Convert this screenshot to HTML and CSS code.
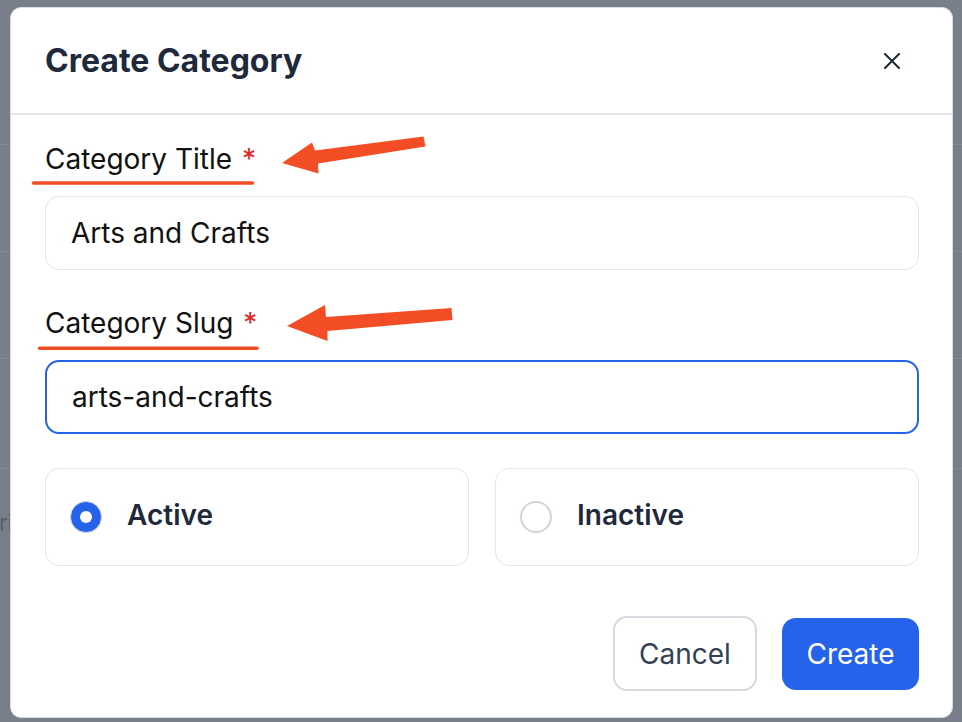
FILE: index.html
```html
<!DOCTYPE html>
<html lang="en">
<head>
<meta charset="utf-8">
<title>Create Category</title>
<link rel="stylesheet" href="styles.css">
</head>
<body>
<div class="page">
  <div class="page-top"></div>
  <div class="page-row"></div>
  <div class="page-row"></div>
  <div class="page-row"></div>
  <div class="page-row"><span class="peek">ri</span></div>
</div>

<div class="modal">
  <div class="modal-header">
    <h2 class="modal-title">Create Category</h2>
    <button class="close-btn" aria-label="Close">
      <svg width="16" height="16" viewBox="0 0 16 16"><path d="M1 1 L15 15 M15 1 L1 15" stroke="#1f2937" stroke-width="2" stroke-linecap="round"/></svg>
    </button>
  </div>
  <div class="modal-body">
    <div class="field">
      <label class="label">Category Title <span class="req">*</span></label>
      <div class="input">Arts and Crafts</div>
    </div>
    <div class="field field-second">
      <label class="label">Category Slug <span class="req">*</span></label>
      <div class="input input-focus">arts-and-crafts</div>
    </div>
    <div class="options">
      <div class="option">
        <span class="radio radio-on"><span class="dot"></span></span>
        <span class="option-text">Active</span>
      </div>
      <div class="option">
        <span class="radio"></span>
        <span class="option-text">Inactive</span>
      </div>
    </div>
    <div class="footer">
      <button class="btn btn-cancel">Cancel</button>
      <button class="btn btn-create">Create</button>
    </div>
  </div>
</div>

<svg class="annotations" width="962" height="722" viewBox="0 0 962 722">
  <line x1="33.5" y1="183" x2="252.5" y2="183" stroke="#f34d26" stroke-width="3.5" stroke-linecap="round"/>
  <polygon points="282,163 312,142.5 315,150.5 423.5,136.5 425.5,146.5 318,163.5 318.5,173.5" fill="#f34d26"/>
  <line x1="39.5" y1="348.3" x2="257" y2="348.3" stroke="#f34d26" stroke-width="3.5" stroke-linecap="round"/>
  <polygon points="287,326 325,305 326,317 451.5,308 452.5,320 327.5,331 327.5,341" fill="#f34d26"/>
</svg>
</body>
</html>
```

FILE: styles.css
```css
* { box-sizing: border-box; }

html, body {
  margin: 0;
  padding: 0;
}

body {
  width: 962px;
  height: 722px;
  overflow: hidden;
  background: #797e8b;
  font-family: Inter, "Noto Sans", sans-serif;
  position: relative;
}

.page-top {
  height: 145px;
  border-bottom: 1px solid #838894;
}

.page-row {
  height: 107px;
  border-bottom: 1px solid #838894;
}

.page-row:nth-child(4) { height: 110px; }

.page-row:last-child {
  border-bottom: none;
  display: flex;
  align-items: center;
}

.peek {
  font-size: 23px;
  color: #5b606c;
  margin-left: -1px;
  letter-spacing: -0.5px;
}

.modal {
  position: absolute;
  left: 10px;
  top: 7px;
  width: 943px;
  background: #fff;
  border: 1px solid #d9dbe1;
  border-radius: 11px;
}

.modal-header {
  height: 107px;
  border-bottom: 2px solid #e5e7eb;
  display: flex;
  align-items: center;
  justify-content: space-between;
  padding: 0 52px 0 34px;
}

.modal-title {
  margin: 0;
  font-size: 32px;
  font-weight: 700;
  color: #1e293b;
}

.close-btn {
  border: none;
  background: none;
  padding: 0;
  width: 16px;
  height: 16px;
  display: flex;
}

.modal-body {
  padding: 26px 33px 26px 34px;
}

.field {
  display: flex;
  flex-direction: column;
}

.field-second {
  margin-top: 35px;
}

.label {
  font-size: 28px;
  line-height: 36px;
  color: #111111;
  font-weight: 400;
}

.req {
  color: #dc2626;
  margin-left: 2px;
}

.input {
  margin-top: 19px;
  height: 74px;
  border: 1.5px solid #e3e5ea;
  border-radius: 14px;
  display: flex;
  align-items: center;
  padding-left: 25px;
  font-size: 28px;
  color: #111111;
}

.input-focus {
  border: 2px solid #2563eb;
  padding-left: 25px;
}

.options {
  margin-top: 34px;
  display: grid;
  grid-template-columns: 1fr 1fr;
  gap: 26px;
}

.option {
  height: 98px;
  border: 1.5px solid #e3e5ea;
  border-radius: 14px;
  display: flex;
  align-items: center;
  padding-left: 24px;
  gap: 25px;
}

.radio {
  width: 32px;
  height: 32px;
  border-radius: 50%;
  border: 2px solid #d1d5db;
  background: #fff;
  display: flex;
  align-items: center;
  justify-content: center;
  flex: none;
}

.radio-on {
  background: #2563eb;
  border: 1.5px solid #cfd3da;
  box-shadow: inset 0 0 0 0.5px #2563eb;
}

.dot {
  width: 12px;
  height: 12px;
  border-radius: 50%;
  background: #fff;
}

.option-text {
  font-size: 28px;
  font-weight: 600;
  color: #1e293b;
  margin-top: -4px;
}

.footer {
  margin-top: 50px;
  display: flex;
  justify-content: flex-end;
  align-items: center;
  gap: 25px;
}

.btn {
  font-family: Inter, "Noto Sans", sans-serif;
  font-size: 28px;
  border-radius: 14px;
  cursor: pointer;
}

.btn-cancel {
  width: 144px;
  height: 75px;
  background: #fff;
  border: 2px solid #d6d9df;
  color: #334155;
}

.btn-create {
  width: 137px;
  height: 72px;
  background: #2563eb;
  border: none;
  color: #fff;
}

.annotations {
  position: absolute;
  left: 0;
  top: 0;
  pointer-events: none;
}
```
